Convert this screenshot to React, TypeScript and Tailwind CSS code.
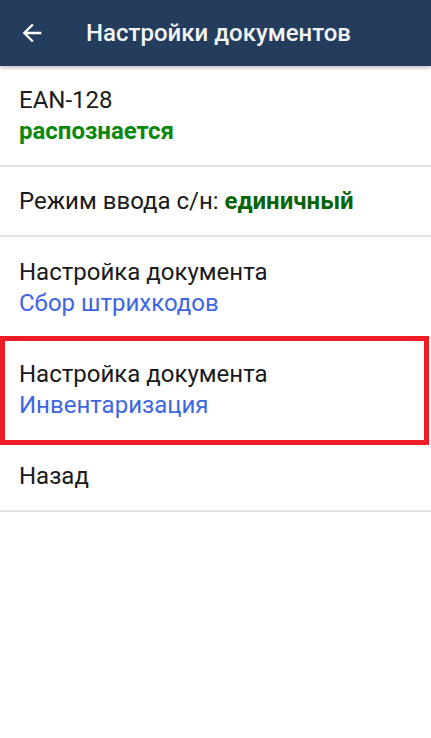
import type { ReactNode } from 'react';

function Row({ children, className = 'pt-[19px] pb-[18px]' }: { children: ReactNode; className?: string }) {
  return <div className={`relative px-[19px] border-b-2 border-[#e3e3e3] ${className}`}>{children}</div>;
}

export default function App() {
  return (
    <div className="w-[431px] h-[738px] bg-white overflow-hidden" style={{ fontFamily: 'Roboto, "Noto Sans", sans-serif' }}>
      {/* Toolbar */}
      <div className="relative z-10 h-[66px] bg-[#243d5c] flex items-center shadow-[0_2px_4px_rgba(0,0,0,0.25)]">
        <svg className="ml-[18px] w-[28px] h-[28px]" viewBox="0 0 24 24" fill="#ffffff">
          <path d="M20 11H7.83l5.59-5.59L12 4l-8 8 8 8 1.41-1.41L7.83 13H20v-2z" />
        </svg>
        <h1 className="ml-[40px] text-[24px] font-medium text-[#f4f5f7]">Настройки документов</h1>
      </div>

      <div className="text-[24px] leading-[31px] text-[#1a1a1a]">
        <Row>
          <div>EAN-128</div>
          <div className="font-bold text-[#0a880c]">распознается</div>
        </Row>

        <Row className="pt-[19px] pb-[18px]">
          <div>
            Режим ввода с/н: <span className="font-bold text-[#066406]">единичный</span>
          </div>
        </Row>

        <Row className="pt-[20px] pb-[18px]">
          <div>Настройка документа</div>
          <div className="text-[#3d66e2]">Сбор штрихкодов</div>
        </Row>

        <Row className="pt-[20px] pb-[19px]">
          <div>Настройка документа</div>
          <div className="text-[#3d66e2]">Инвентаризация</div>
          {/* highlight frame */}
          <div className="absolute left-0 right-[2px] -top-[3px] -bottom-[5px] border-[5px] border-[#ee1d25] pointer-events-none" />
        </Row>

        <Row className="pt-[19px] pb-[18px]">
          <div>Назад</div>
        </Row>
      </div>
    </div>
  );
}
